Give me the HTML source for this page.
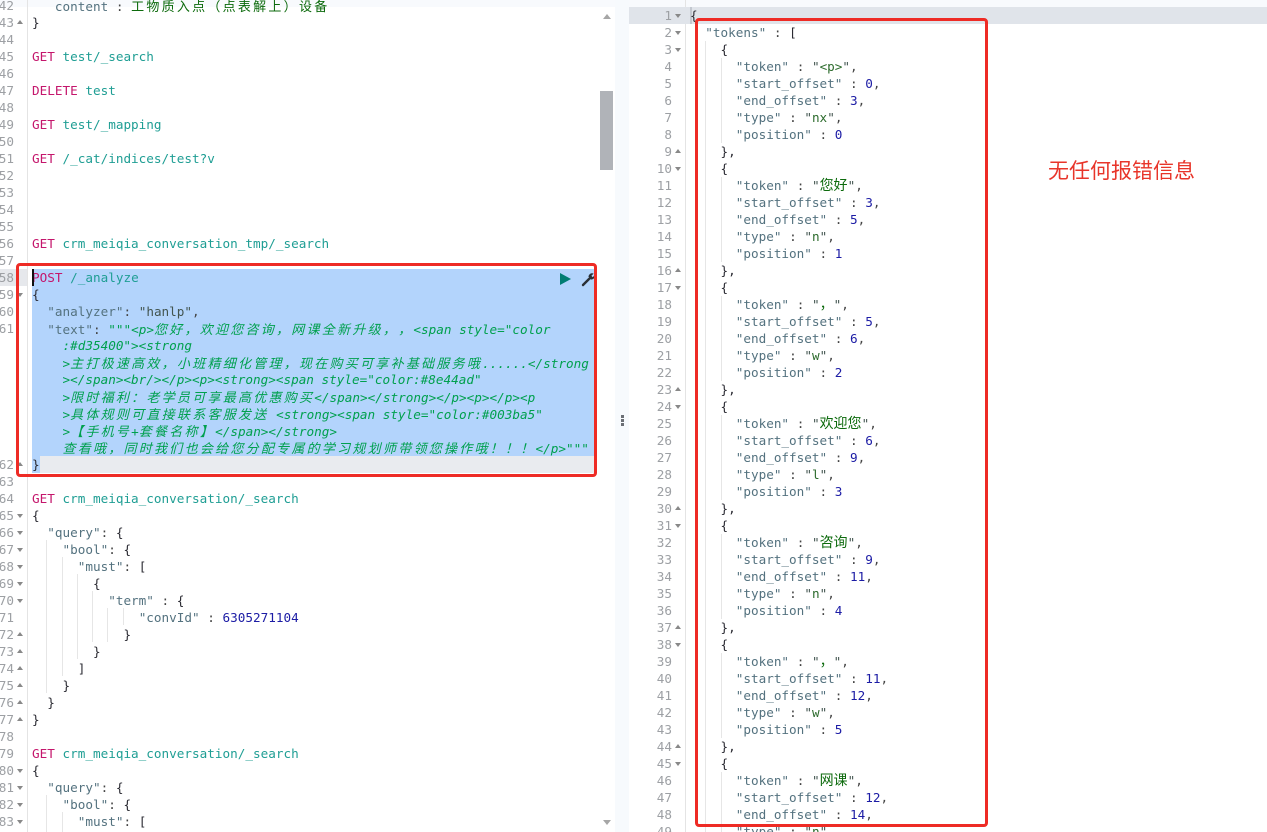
<!DOCTYPE html>
<html lang="zh">
<head>
<meta charset="utf-8">
<title>Console</title>
<style>
html,body{margin:0;padding:0;background:#fff;}
#page{position:relative;width:1267px;height:832px;overflow:hidden;background:#fff;font-family:"DejaVu Sans Mono","Liberation Mono","Noto Sans CJK SC",monospace;font-size:12.67px;color:#333;}
.abs{position:absolute;}
.code{position:absolute;line-height:17px;}
.l{height:17px;white-space:pre;}
.gut{position:absolute;text-align:right;line-height:17px;color:#9da0a4;}
.g{height:17px;position:relative;}
.d:after,.u:after{content:"";position:absolute;width:0;height:0;border-left:3px solid transparent;border-right:3px solid transparent;}
.d:after{border-top:4px solid #888;top:7px;}
.u:after{border-bottom:4px solid #888;top:6px;}
#gl .g:after{left:23px;}
#gr .g:after{left:43px;}
.m{color:#c4166c;}
.p{color:#1f9e94;}
.k{color:#54727f;}
.o{color:#444;}
.v{color:#42544f;}
.n{color:#1c1ca5;}
.g1{color:#2c6b2c;}
.z{color:#0c6a0c;font-size:14px;font-family:"Noto Sans CJK SC",sans-serif;text-spacing-trim:space-all;}
.s{color:#00a04e;font-style:italic;}
.c{font-family:"Noto Sans CJK SC",sans-serif;font-size:13px;letter-spacing:2.26px;text-spacing-trim:space-all;}
.b{color:#2b2b33;}
.guide{position:absolute;width:1px;background:#e6e6e6;}
.red{position:absolute;box-sizing:border-box;border:3px solid #ee2b25;border-radius:4px;}
</style>
</head>
<body>
<div id="page">
  <!-- panel backgrounds -->
  <div class="abs" style="left:0;top:0;width:1267px;height:7px;background:#f8fafd;"></div>
  <div class="abs" style="left:615px;top:0;width:14px;height:832px;background:#f7fafd;"></div>
  <div class="abs" style="left:27px;top:0;width:1px;height:832px;background:#e4e4e4;"></div>
  <div class="abs" style="left:685px;top:0;width:1px;height:832px;background:#e4e4e4;"></div>

  <!-- left highlights -->
  <div class="abs" style="left:0;top:269px;width:27px;height:17px;background:#e6e8ec;"></div>
  <div class="abs" style="left:32px;top:269px;width:563px;height:187px;background:#b3d4fc;"></div>
  <div class="abs" style="left:40px;top:456px;width:555px;height:17px;background:#e9ebef;"></div>
  <div class="abs" style="left:32px;top:456px;width:8px;height:17px;background:#b3d4fc;"></div>

  <!-- right highlights -->
  <div class="abs" style="left:629px;top:7px;width:638px;height:17px;background:#e0e4ea;"></div>
  <div class="abs" style="left:690px;top:7px;width:2px;height:17px;background:#c3c8d0;"></div>

  <!-- left guides -->
  <div class="guide" style="left:46px;top:540px;height:153px;"></div>
  <div class="guide" style="left:62px;top:557px;height:119px;"></div>
  <div class="guide" style="left:77px;top:574px;height:85px;"></div>
  <div class="guide" style="left:92px;top:591px;height:51px;"></div>
  <div class="guide" style="left:107px;top:608px;height:34px;"></div>
  <div class="guide" style="left:123px;top:608px;height:17px;"></div>
  <div class="guide" style="left:46px;top:795px;height:37px;"></div>
  <div class="guide" style="left:62px;top:812px;height:20px;"></div>

  <!-- right guides -->
  <div class="guide" style="left:705px;top:41px;height:791px;"></div>
  <div class="guide" style="left:721px;top:58px;height:85px;"></div>
  <div class="guide" style="left:721px;top:177px;height:85px;"></div>
  <div class="guide" style="left:721px;top:296px;height:85px;"></div>
  <div class="guide" style="left:721px;top:415px;height:85px;"></div>
  <div class="guide" style="left:721px;top:534px;height:85px;"></div>
  <div class="guide" style="left:721px;top:653px;height:85px;"></div>
  <div class="guide" style="left:721px;top:772px;height:60px;"></div>

  <!-- left gutter -->
  <div class="gut" id="gl" style="left:-6px;top:-3px;width:20px;">
    <div class="g">42</div><div class="g u">43</div><div class="g">44</div><div class="g">45</div><div class="g">46</div><div class="g">47</div><div class="g">48</div><div class="g">49</div><div class="g">50</div><div class="g">51</div><div class="g">52</div><div class="g">53</div><div class="g">54</div><div class="g">55</div><div class="g">56</div><div class="g">57</div><div class="g">58</div><div class="g d">59</div><div class="g">60</div><div class="g">61</div><div class="g"></div><div class="g"></div><div class="g"></div><div class="g"></div><div class="g"></div><div class="g"></div><div class="g"></div><div class="g u">62</div><div class="g">63</div><div class="g">64</div><div class="g d">65</div><div class="g d">66</div><div class="g d">67</div><div class="g d">68</div><div class="g d">69</div><div class="g d">70</div><div class="g">71</div><div class="g u">72</div><div class="g u">73</div><div class="g u">74</div><div class="g u">75</div><div class="g u">76</div><div class="g u">77</div><div class="g">78</div><div class="g">79</div><div class="g d">80</div><div class="g d">81</div><div class="g d">82</div><div class="g d">83</div>
  </div>

  <!-- left code -->
  <div class="code" style="left:32px;top:-3px;width:563px;">
<div class="l">   <span class="k">content</span> <span class="o">:</span> <span class="z c" style="font-size:13px;">工物质入点（点表解上）设备</span></div>
<div class="l"><span class="b">}</span></div>
<div class="l"></div>
<div class="l"><span class="m">GET</span> <span class="p">test/_search</span></div>
<div class="l"></div>
<div class="l"><span class="m">DELETE</span> <span class="p">test</span></div>
<div class="l"></div>
<div class="l"><span class="m">GET</span> <span class="p">test/_mapping</span></div>
<div class="l"></div>
<div class="l"><span class="m">GET</span> <span class="p">/_cat/indices/test?v</span></div>
<div class="l"></div>
<div class="l"></div>
<div class="l"></div>
<div class="l"></div>
<div class="l"><span class="m">GET</span> <span class="p">crm_meiqia_conversation_tmp/_search</span></div>
<div class="l"></div>
<div class="l"><span class="m">POST</span> <span class="p">/_analyze</span></div>
<div class="l"><span class="b">{</span></div>
<div class="l">  <span class="k">"analyzer"</span><span class="o">:</span> <span class="v">"hanlp"</span><span class="o">,</span></div>
<div class="l">  <span class="k">"text"</span><span class="o">:</span> <span class="s">"""&lt;p&gt;<span class="c">您好，欢迎您咨询，网课全新升级，，</span>&lt;span style="color</span></div>
<div class="l"><span class="s">    :#d35400"&gt;&lt;strong</span></div>
<div class="l"><span class="s">    &gt;<span class="c">主打极速高效，小班精细化管理，现在购买可享补基础服务哦</span>......&lt;/strong</span></div>
<div class="l"><span class="s">    &gt;&lt;/span&gt;&lt;br/&gt;&lt;/p&gt;&lt;p&gt;&lt;strong&gt;&lt;span style="color:#8e44ad"</span></div>
<div class="l"><span class="s">    &gt;<span class="c">限时福利：老学员可享最高优惠购买</span>&lt;/span&gt;&lt;/strong&gt;&lt;/p&gt;&lt;p&gt;&lt;/p&gt;&lt;p</span></div>
<div class="l"><span class="s">    &gt;<span class="c">具体规则可直接联系客服发送</span> &lt;strong&gt;&lt;span style="color:#003ba5"</span></div>
<div class="l"><span class="s">    &gt;<span class="c">【手机号</span>+<span class="c">套餐名称】</span>&lt;/span&gt;&lt;/strong&gt;</span></div>
<div class="l"><span class="s">    <span class="c">查看哦，同时我们也会给您分配专属的学习规划师带领您操作哦！！！</span>&lt;/p&gt;"""</span></div>
<div class="l"><span class="b">}</span></div>
<div class="l"></div>
<div class="l"><span class="m">GET</span> <span class="p">crm_meiqia_conversation/_search</span></div>
<div class="l"><span class="b">{</span></div>
<div class="l">  <span class="k">"query"</span><span class="o">:</span> <span class="b">{</span></div>
<div class="l">    <span class="k">"bool"</span><span class="o">:</span> <span class="b">{</span></div>
<div class="l">      <span class="k">"must"</span><span class="o">:</span> <span class="b">[</span></div>
<div class="l">        <span class="b">{</span></div>
<div class="l">          <span class="k">"term"</span> <span class="o">:</span> <span class="b">{</span></div>
<div class="l">              <span class="k">"convId"</span> <span class="o">:</span> <span class="n">6305271104</span></div>
<div class="l">            <span class="b">}</span></div>
<div class="l">        <span class="b">}</span></div>
<div class="l">      <span class="b">]</span></div>
<div class="l">    <span class="b">}</span></div>
<div class="l">  <span class="b">}</span></div>
<div class="l"><span class="b">}</span></div>
<div class="l"></div>
<div class="l"><span class="m">GET</span> <span class="p">crm_meiqia_conversation/_search</span></div>
<div class="l"><span class="b">{</span></div>
<div class="l">  <span class="k">"query"</span><span class="o">:</span> <span class="b">{</span></div>
<div class="l">    <span class="k">"bool"</span><span class="o">:</span> <span class="b">{</span></div>
<div class="l">      <span class="k">"must"</span><span class="o">:</span> <span class="b">[</span></div>
  </div>

  <!-- cursor -->
  <div class="abs" style="left:32px;top:269px;width:1.5px;height:17px;background:#111;"></div>

  <!-- play + wrench -->
  <svg class="abs" style="left:558px;top:272px;" width="14" height="14" viewBox="0 0 14 14"><path d="M2 1 L13 7 L2 13 Z" fill="#017d73"/></svg>
  <svg class="abs" style="left:581px;top:272px;" width="15" height="15" viewBox="0 0 15 15"><path d="M2 13 L8 7" stroke="#2a2f36" stroke-width="2.4" stroke-linecap="round" fill="none"/><path d="M7.5 5 A3.6 3.6 0 0 1 12.6 1.6 L10.4 3.8 L11.6 5.2 L13.8 3.2 A3.6 3.6 0 0 1 9.4 7.4 Z" fill="#2a2f36"/></svg>

  <!-- scrollbar -->
  <div class="abs" style="left:600px;top:91px;width:13px;height:79px;background:#b0b3b8;"></div>
  <div class="abs" style="left:603px;top:14px;width:0;height:0;border-left:4px solid transparent;border-right:4px solid transparent;border-bottom:5px solid #a6a6a6;"></div>
  <div class="abs" style="left:603px;top:820px;width:0;height:0;border-left:4px solid transparent;border-right:4px solid transparent;border-top:5px solid #a6a6a6;"></div>

  <!-- resizer -->
  <div class="abs" style="left:621px;top:415px;width:3px;height:3px;background:#6b6f75;"></div>
  <div class="abs" style="left:621px;top:419px;width:3px;height:3px;background:#6b6f75;"></div>
  <div class="abs" style="left:621px;top:423px;width:3px;height:3px;background:#6b6f75;"></div>

  <!-- right gutter -->
  <div class="gut" id="gr" style="left:632px;top:7px;width:40px;">
    <div class="g d">1</div><div class="g d">2</div><div class="g d">3</div><div class="g">4</div><div class="g">5</div><div class="g">6</div><div class="g">7</div><div class="g">8</div><div class="g u">9</div><div class="g d">10</div><div class="g">11</div><div class="g">12</div><div class="g">13</div><div class="g">14</div><div class="g">15</div><div class="g u">16</div><div class="g d">17</div><div class="g">18</div><div class="g">19</div><div class="g">20</div><div class="g">21</div><div class="g">22</div><div class="g u">23</div><div class="g d">24</div><div class="g">25</div><div class="g">26</div><div class="g">27</div><div class="g">28</div><div class="g">29</div><div class="g u">30</div><div class="g d">31</div><div class="g">32</div><div class="g">33</div><div class="g">34</div><div class="g">35</div><div class="g">36</div><div class="g u">37</div><div class="g d">38</div><div class="g">39</div><div class="g">40</div><div class="g">41</div><div class="g">42</div><div class="g">43</div><div class="g u">44</div><div class="g d">45</div><div class="g">46</div><div class="g">47</div><div class="g">48</div><div class="g">49</div>
  </div>

  <!-- right code -->
  <div class="code" style="left:690px;top:7px;">
<div class="l"><span class="b">{</span></div>
<div class="l">  <span class="k">"tokens"</span> <span class="o">:</span> <span class="b">[</span></div>
<div class="l">    <span class="b">{</span></div>
<div class="l">      <span class="k">"token"</span> <span class="o">:</span> <span class="v">"<span class="g1">&lt;p&gt;</span>"</span><span class="o">,</span></div>
<div class="l">      <span class="k">"start_offset"</span> <span class="o">:</span> <span class="n">0</span><span class="o">,</span></div>
<div class="l">      <span class="k">"end_offset"</span> <span class="o">:</span> <span class="n">3</span><span class="o">,</span></div>
<div class="l">      <span class="k">"type"</span> <span class="o">:</span> <span class="v">"<span class="g1">nx</span>"</span><span class="o">,</span></div>
<div class="l">      <span class="k">"position"</span> <span class="o">:</span> <span class="n">0</span></div>
<div class="l">    <span class="b">},</span></div>
<div class="l">    <span class="b">{</span></div>
<div class="l">      <span class="k">"token"</span> <span class="o">:</span> <span class="v">"<span class="z">您好</span>"</span><span class="o">,</span></div>
<div class="l">      <span class="k">"start_offset"</span> <span class="o">:</span> <span class="n">3</span><span class="o">,</span></div>
<div class="l">      <span class="k">"end_offset"</span> <span class="o">:</span> <span class="n">5</span><span class="o">,</span></div>
<div class="l">      <span class="k">"type"</span> <span class="o">:</span> <span class="v">"<span class="g1">n</span>"</span><span class="o">,</span></div>
<div class="l">      <span class="k">"position"</span> <span class="o">:</span> <span class="n">1</span></div>
<div class="l">    <span class="b">},</span></div>
<div class="l">    <span class="b">{</span></div>
<div class="l">      <span class="k">"token"</span> <span class="o">:</span> <span class="v">"<span class="z">，</span>"</span><span class="o">,</span></div>
<div class="l">      <span class="k">"start_offset"</span> <span class="o">:</span> <span class="n">5</span><span class="o">,</span></div>
<div class="l">      <span class="k">"end_offset"</span> <span class="o">:</span> <span class="n">6</span><span class="o">,</span></div>
<div class="l">      <span class="k">"type"</span> <span class="o">:</span> <span class="v">"<span class="g1">w</span>"</span><span class="o">,</span></div>
<div class="l">      <span class="k">"position"</span> <span class="o">:</span> <span class="n">2</span></div>
<div class="l">    <span class="b">},</span></div>
<div class="l">    <span class="b">{</span></div>
<div class="l">      <span class="k">"token"</span> <span class="o">:</span> <span class="v">"<span class="z">欢迎您</span>"</span><span class="o">,</span></div>
<div class="l">      <span class="k">"start_offset"</span> <span class="o">:</span> <span class="n">6</span><span class="o">,</span></div>
<div class="l">      <span class="k">"end_offset"</span> <span class="o">:</span> <span class="n">9</span><span class="o">,</span></div>
<div class="l">      <span class="k">"type"</span> <span class="o">:</span> <span class="v">"<span class="g1">l</span>"</span><span class="o">,</span></div>
<div class="l">      <span class="k">"position"</span> <span class="o">:</span> <span class="n">3</span></div>
<div class="l">    <span class="b">},</span></div>
<div class="l">    <span class="b">{</span></div>
<div class="l">      <span class="k">"token"</span> <span class="o">:</span> <span class="v">"<span class="z">咨询</span>"</span><span class="o">,</span></div>
<div class="l">      <span class="k">"start_offset"</span> <span class="o">:</span> <span class="n">9</span><span class="o">,</span></div>
<div class="l">      <span class="k">"end_offset"</span> <span class="o">:</span> <span class="n">11</span><span class="o">,</span></div>
<div class="l">      <span class="k">"type"</span> <span class="o">:</span> <span class="v">"<span class="g1">n</span>"</span><span class="o">,</span></div>
<div class="l">      <span class="k">"position"</span> <span class="o">:</span> <span class="n">4</span></div>
<div class="l">    <span class="b">},</span></div>
<div class="l">    <span class="b">{</span></div>
<div class="l">      <span class="k">"token"</span> <span class="o">:</span> <span class="v">"<span class="z">，</span>"</span><span class="o">,</span></div>
<div class="l">      <span class="k">"start_offset"</span> <span class="o">:</span> <span class="n">11</span><span class="o">,</span></div>
<div class="l">      <span class="k">"end_offset"</span> <span class="o">:</span> <span class="n">12</span><span class="o">,</span></div>
<div class="l">      <span class="k">"type"</span> <span class="o">:</span> <span class="v">"<span class="g1">w</span>"</span><span class="o">,</span></div>
<div class="l">      <span class="k">"position"</span> <span class="o">:</span> <span class="n">5</span></div>
<div class="l">    <span class="b">},</span></div>
<div class="l">    <span class="b">{</span></div>
<div class="l">      <span class="k">"token"</span> <span class="o">:</span> <span class="v">"<span class="z">网课</span>"</span><span class="o">,</span></div>
<div class="l">      <span class="k">"start_offset"</span> <span class="o">:</span> <span class="n">12</span><span class="o">,</span></div>
<div class="l">      <span class="k">"end_offset"</span> <span class="o">:</span> <span class="n">14</span><span class="o">,</span></div>
<div class="l">      <span class="k">"type"</span> <span class="o">:</span> <span class="v">"<span class="g1">n</span>"</span><span class="o">,</span></div>
  </div>

  <!-- annotations -->
  <div class="red" style="left:16px;top:263px;width:581px;height:214px;"></div>
  <div class="red" style="left:695px;top:18px;width:293px;height:809px;"></div>
  <div class="abs" style="left:1048px;top:155px;font-family:'Noto Sans CJK SC',sans-serif;font-size:21px;line-height:30px;color:#e8352a;white-space:nowrap;font-weight:400;">无任何报错信息</div>
</div>
</body>
</html>
